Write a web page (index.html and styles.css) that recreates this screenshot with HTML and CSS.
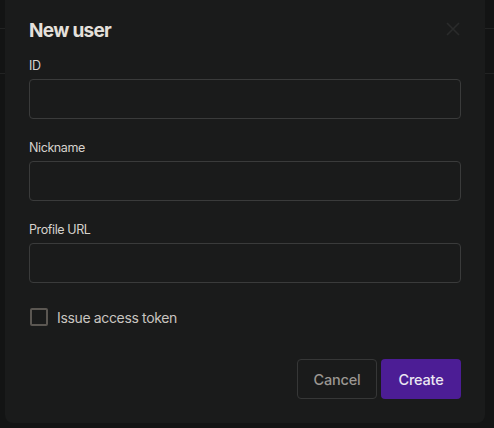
FILE: index.html
```html
<!DOCTYPE html>
<html lang="en">
<head>
<meta charset="utf-8">
<title>New user</title>
<link rel="stylesheet" href="styles.css">
</head>
<body>
<div class="page">
  <div class="page-row page-row-top"></div>
  <div class="page-row"></div>
</div>
<div class="modal" role="dialog" aria-labelledby="modal-title">
  <div class="modal-header">
    <h2 class="modal-title" id="modal-title">New user</h2>
    <button class="close" aria-label="Close">
      <svg width="14" height="14" viewBox="0 0 14 14"><path d="M1 1L13 13M13 1L1 13" stroke="currentColor" stroke-width="1.6" fill="none"/></svg>
    </button>
  </div>
  <form class="form">
    <div class="field">
      <label class="label" for="f-id">ID</label>
      <input class="input" id="f-id" type="text">
    </div>
    <div class="field">
      <label class="label" for="f-nick">Nickname</label>
      <input class="input" id="f-nick" type="text">
    </div>
    <div class="field">
      <label class="label" for="f-url">Profile URL</label>
      <input class="input" id="f-url" type="text">
    </div>
    <label class="check">
      <span class="check-box"></span>
      <span class="check-text">Issue access token</span>
    </label>
    <div class="actions">
      <button type="button" class="btn btn-cancel">Cancel</button>
      <button type="button" class="btn btn-create">Create</button>
    </div>
  </form>
</div>
</body>
</html>
```
FILE: styles.css
```css
* { box-sizing: border-box; }
html, body { margin: 0; padding: 0; }
body {
  width: 494px;
  height: 428px;
  overflow: hidden;
  background: #131414;
  font-family: Inter, "Noto Sans", sans-serif;
  position: relative;
}
.page-row {
  height: 45px;
  border-bottom: 1px solid #222323;
}
.page-row-top { height: 29px; }
.modal {
  position: absolute;
  left: 5px;
  top: -8px;
  width: 480px;
  background: #1a1b1b;
  border-radius: 8px;
  padding: 25px 24px 24px;
}
.modal-header {
  display: flex;
  align-items: flex-start;
  justify-content: space-between;
  height: 28px;
}
.modal-title {
  margin: 0;
  font-size: 19px;
  line-height: 28px;
  font-weight: 700;
  color: #e4e0db;
  letter-spacing: -0.7px;
}
.close {
  background: none;
  border: 0;
  padding: 0;
  width: 14px;
  height: 14px;
  margin-right: 1px;
  margin-top: 5px;
  color: #2a2b2b;
  display: flex;
}
.form {
  display: flex;
  flex-direction: column;
  margin-top: 11px;
}
.field {
  display: flex;
  flex-direction: column;
  margin-bottom: 19px;
}
.label {
  font-size: 12.5px;
  line-height: 20px;
  color: #d6d2cd;
  letter-spacing: -0.4px;
  margin-bottom: 3px;
}
.input {
  height: 40px;
  width: 100%;
  background: transparent;
  border: 1px solid #3a3b3b;
  border-radius: 4px;
}
.check {
  display: flex;
  align-items: center;
  gap: 9px;
  margin-top: 5px;
  padding-left: 1px;
  height: 20px;
}
.check-box {
  width: 18px;
  height: 18px;
  border: 2px solid #5b5752;
  border-radius: 2px;
}
.check-text {
  font-size: 14px;
  letter-spacing: -0.35px;
  color: #c9c5c0;
}
.actions {
  display: flex;
  justify-content: flex-end;
  gap: 4px;
  margin-top: 32px;
}
.btn {
  height: 40px;
  width: 80px;
  border-radius: 4px;
  font-family: inherit;
  font-size: 14.5px;
  letter-spacing: -0.2px;
  font-weight: 500;
}
.btn-cancel {
  background: transparent;
  border: 1px solid #363737;
  color: #9b9792;
}
.btn-create {
  background: #4c1d95;
  border: 0;
  color: #ebe7f2;
}
```
